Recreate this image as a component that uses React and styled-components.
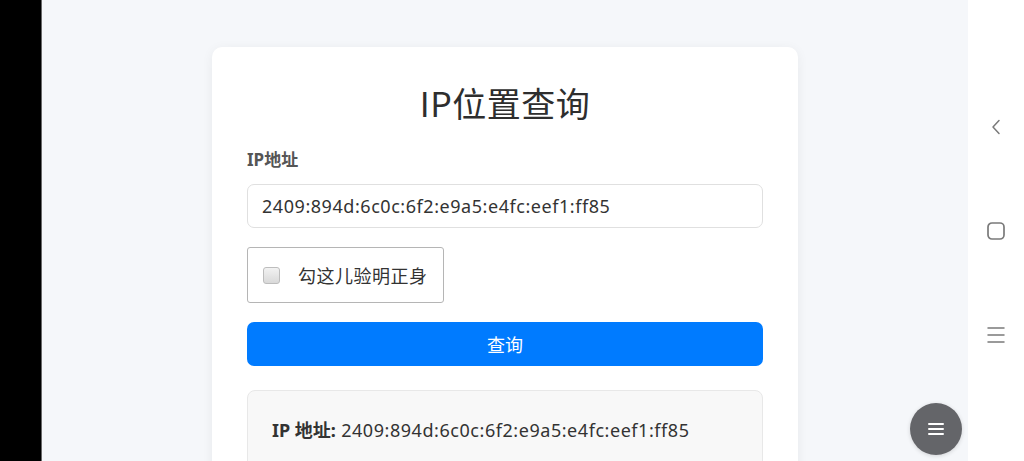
import React from "react";
import styled, { createGlobalStyle } from "styled-components";

const GlobalStyle = createGlobalStyle`
  html, body { margin: 0; padding: 0; height: 100%; }
  body {
    font-family: "Noto Sans", "Noto Sans CJK SC", sans-serif;
    color: #333;
    overflow: hidden;
  }
  * { box-sizing: border-box; }
`;

const Screen = styled.div`
  display: flex;
  height: 100vh;
  width: 100vw;
  overflow: hidden;
`;

const LeftEdge = styled.div`
  width: 42px;
  flex: none;
  background: #000;
  border-right: 1px solid #6a6a6a;
`;

const Main = styled.main`
  flex: 1;
  background: #f5f7fa;
  display: flex;
  justify-content: center;
  align-items: flex-start;
  padding-top: 47px;
  overflow: hidden;
`;

const Card = styled.section`
  width: 586px;
  flex: none;
  background: #fff;
  border-radius: 10px;
  box-shadow: 0 2px 12px rgba(0, 0, 0, 0.06);
  padding: 33px 35px 60px;
  display: flex;
  flex-direction: column;
`;

const Title = styled.h1`
  margin: 0 0 22px;
  font-family: "Noto Sans CJK SC", "Noto Sans", sans-serif;
  font-size: 34px;
  line-height: 46px;
  font-weight: 400;
  letter-spacing: 0.5px;
  text-align: center;
  color: #2e2e2e;
`;

const Label = styled.label`
  font-size: 17px;
  line-height: 24px;
  font-weight: 700;
  color: #555;
  margin-bottom: 12px;
`;

const TextInput = styled.input`
  height: 44px;
  width: 100%;
  border: 1px solid #e0e0e0;
  border-radius: 7px;
  padding: 0 14px;
  font-family: inherit;
  font-size: 18px;
  letter-spacing: 0.55px;
  color: #333;
  background: #fff;
  outline: none;
`;

const CheckWrap = styled.label`
  margin-top: 19px;
  align-self: flex-start;
  height: 56px;
  display: flex;
  align-items: center;
  gap: 18px;
  padding: 0 15px;
  border: 1px solid #b5b5b5;
  border-radius: 3px;
  font-size: 18px;
  letter-spacing: 0.5px;
  color: #333;
`;

const Box = styled.input`
  appearance: none;
  margin: 0;
  width: 17px;
  height: 17px;
  border: 1px solid #bdbdbd;
  border-radius: 3px;
  background: linear-gradient(#f2f2f2, #d9d9d9);
`;

const Submit = styled.button`
  margin-top: 19px;
  height: 44px;
  width: 100%;
  border: none;
  border-radius: 7px;
  background: #007bff;
  color: #fff;
  font-family: inherit;
  font-size: 18px;
`;

const Result = styled.div`
  margin-top: 24px;
  background: #f8f8f8;
  border: 1px solid #e8e8e8;
  border-radius: 8px;
  padding: 27px 24px 60px;
  font-size: 18px;
  line-height: 24px;
  letter-spacing: 0.55px;
  color: #333;
`;

const ResultKey = styled.strong`
  font-weight: 700;
  letter-spacing: 0;
`;

const NavBar = styled.nav`
  width: 56px;
  flex: none;
  background: #fff;
  display: flex;
  flex-direction: column;
  align-items: center;
  justify-content: center;
  gap: 84px;
`;

const NavIcon = styled.svg`
  width: 20px;
  height: 20px;
  display: block;
  color: #7a7a7a;
`;

const Fab = styled.button`
  position: fixed;
  right: 62px;
  bottom: 6px;
  width: 52px;
  height: 52px;
  border-radius: 50%;
  border: none;
  background: #646569;
  display: flex;
  align-items: center;
  justify-content: center;
  padding: 0;
  box-shadow: 0 1px 4px rgba(0, 0, 0, 0.15);
`;

const ip = "2409:894d:6c0c:6f2:e9a5:e4fc:eef1:ff85";

export default function App() {
  return (
    <>
      <GlobalStyle />
      <Screen>
        <LeftEdge />
        <Main>
          <Card>
            <Title>IP位置查询</Title>
            <Label htmlFor="ip">IP地址</Label>
            <TextInput id="ip" defaultValue={ip} />
            <CheckWrap>
              <Box type="checkbox" />
              勾这儿验明正身
            </CheckWrap>
            <Submit>查询</Submit>
            <Result>
              <ResultKey>IP 地址:</ResultKey> {ip}
            </Result>
          </Card>
        </Main>
        <NavBar>
          <NavIcon viewBox="0 0 20 20" fill="none" stroke="currentColor" strokeWidth="1.5" strokeLinecap="round" strokeLinejoin="round">
            <path d="M13 3.5 L7 10 L13 16.5" />
          </NavIcon>
          <NavIcon viewBox="0 0 20 20" fill="none" stroke="currentColor" strokeWidth="1.7">
            <rect x="2" y="2" width="16" height="16" rx="4" />
          </NavIcon>
          <NavIcon viewBox="0 0 20 20" fill="none" stroke="currentColor" strokeWidth="1.5" strokeLinecap="round">
            <path d="M2 3 H18 M2 10 H18 M2 17 H18" />
          </NavIcon>
        </NavBar>
        <Fab aria-label="menu">
          <svg width="18" height="16" viewBox="0 0 18 16" fill="none" stroke="#fff" strokeWidth="2" strokeLinecap="round">
            <path d="M2 3 H16 M2 8 H16 M2 13 H16" />
          </svg>
        </Fab>
      </Screen>
    </>
  );
}
